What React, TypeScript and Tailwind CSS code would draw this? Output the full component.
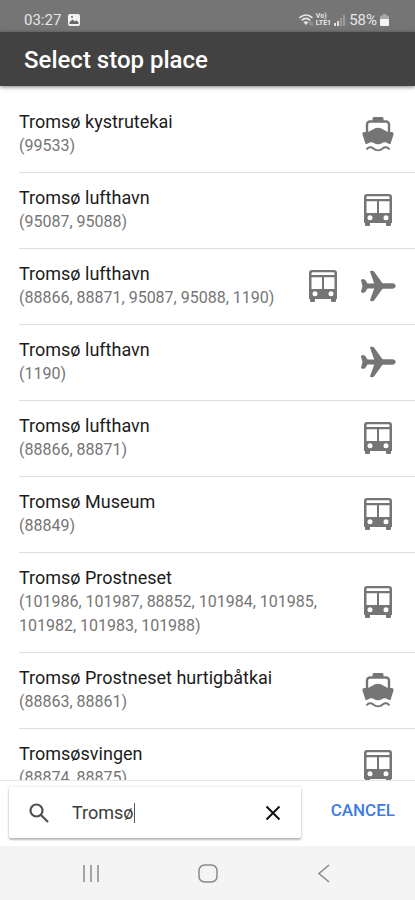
import React, { useState } from "react";

type Mode = "bus" | "boat" | "plane";

const stops: { name: string; codes: string; modes: Mode[] }[] = [
  { name: "Tromsø kystrutekai", codes: "99533", modes: ["boat"] },
  { name: "Tromsø lufthavn", codes: "95087, 95088", modes: ["bus"] },
  {
    name: "Tromsø lufthavn",
    codes: "88866, 88871, 95087, 95088, 1190",
    modes: ["bus", "plane"],
  },
  { name: "Tromsø lufthavn", codes: "1190", modes: ["plane"] },
  { name: "Tromsø lufthavn", codes: "88866, 88871", modes: ["bus"] },
  { name: "Tromsø Museum", codes: "88849", modes: ["bus"] },
  {
    name: "Tromsø Prostneset",
    codes: "101986, 101987, 88852, 101984, 101985, 101982, 101983, 101988",
    modes: ["bus"],
  },
  {
    name: "Tromsø Prostneset hurtigbåtkai",
    codes: "88863, 88861",
    modes: ["boat"],
  },
  { name: "Tromsøsvingen", codes: "88874, 88875", modes: ["bus"] },
];

const BusIcon = () => (
  <svg width="36" height="36" viewBox="0 0 36 36" role="img" aria-label="Bus">
    <path
      fill="currentColor"
      fillRule="evenodd"
      d="M7 2h22a3 3 0 0 1 3 3v26h-1v2a1 1 0 0 1-1 1h-3a1 1 0 0 1-1-1v-2H10v2a1 1 0 0 1-1 1H6a1 1 0 0 1-1-1v-2H4V5a3 3 0 0 1 3-3zM7.500 4.300a1 1 0 0 0-1 1V7h23V5.300a1 1 0 0 0-1-1zM6.500 9.300V21H17V9.300zM19 9.300V21h10.500V9.300zM10 23.200a2.500 2.500 0 1 0 0 5 2.500 2.500 0 0 0 0-5zM26 23.200a2.500 2.500 0 1 0 0 5 2.500 2.500 0 0 0 0-5z"
    />
  </svg>
);

const BoatIcon = () => (
  <svg width="36" height="36" viewBox="0 0 36 36" role="img" aria-label="Boat">
    <path
      fill="currentColor"
      d="M12.500 5V2.500a1.500 1.500 0 0 1 1.500-1.500h8a1.500 1.500 0 0 1 1.500 1.500V5z"
    />
    <path
      fill="none"
      stroke="currentColor"
      strokeWidth="2.400"
      d="M7 18V8.500a3 3 0 0 1 3-3h16a3 3 0 0 1 3 3V18"
    />
    <path
      fill="currentColor"
      d="M7 16c4-.5 5.500-3.800 11-4.300 5.500.5 7 3.800 11 4.300h2.500c1.500 0 2.400 1 2 2.400L30.500 28c-2 .5-3.500-1.500-5.500-1.700-2.500-.2-3.500 2-7 2s-4.500-2.200-7-2C9 26.500 7.500 28.500 5.500 28L2.500 18.400c-.4-1.400.5-2.400 2-2.400z"
    />
    <path
      fill="none"
      stroke="currentColor"
      strokeWidth="2"
      d="M6.500 33.500c2-2.500 4.500-3 6.500-1.200 3 2.600 7 2.600 10 0 2-1.800 4.500-1.300 6.500 1.200"
    />
  </svg>
);

const PlaneIcon = () => (
  <svg width="36" height="36" viewBox="0 0 36 36" role="img" aria-label="Plane">
    <path
      fill="currentColor"
      d="M1 12.500c0-.8.500-1.200 1.200-1.200h1.600c.7 0 1.200.3 1.600.9L7.500 15.600h6.700L10.300 4.500C9.800 3.300 10.400 2.800 11.400 2.800h1c.8 0 1.300.3 1.800 1L22.500 15.300h9.800c2 0 3.400 1.300 3.400 2.700s-1.400 2.700-3.400 2.700h-9.800L14.200 32.200c-.5.7-1 1-1.800 1h-1c-1 0-1.600-.5-1.100-1.700l3.900-11.100H7.500l-2.100 3.400c-.4.6-.9.900-1.600.9H2.200c-.7 0-1.200-.4-1.200-1.200L2.500 18z"
    />
  </svg>
);

const icons = { bus: BusIcon, boat: BoatIcon, plane: PlaneIcon };

const StatusBar = () => (
  <div className="flex h-8 shrink-0 items-end justify-between bg-[#757575] pr-[26px] pl-6 text-[#e6e6e6]">
    <div className="flex items-center gap-1.5">
      <span className="text-[15px] leading-6">03:27</span>
      <svg width="14" height="14" viewBox="0 0 14 14" aria-hidden="true">
        <rect x="1" y="1" width="12" height="12" rx="2" fill="#f2f2f2" />
        <path d="M2.500 11V9l3-2.500L8 8.500l1.500-1.200 2 2V11z" fill="#686868" />
        <circle cx="5" cy="4" r="1" fill="#686868" />
      </svg>
    </div>
    <div className="flex items-center gap-[3px]">
      <svg width="14" height="14" viewBox="0 0 14 14" aria-hidden="true">
        <g fill="none" stroke="#e6e6e6" strokeWidth="1.600">
          <path d="M.5 5c4-3.800 9-3.800 13 0" />
          <path d="M2.800 7.300c2.600-2.400 5.800-2.400 8.400 0" />
        </g>
        <path d="M4.500 9.300c1.600-1.400 3.400-1.400 5 0L7 12z" fill="#e6e6e6" />
        <path d="M11 8v4M13 9v4" stroke="#a8a8a8" />
      </svg>
      <span className="flex flex-col text-[7px] leading-[7px] font-bold">
        <span>Vo)</span>
        <span>LTE1</span>
      </span>
      <svg width="12" height="14" viewBox="0 0 12 14" aria-hidden="true">
        <path d="M0 13v-3h2v3zM3 13V8h2v5z" fill="#e0e0e0" />
        <path d="M6 13V5h2v8zM9 13V2h2v11z" fill="#9c9c9c" />
      </svg>
      <span className="text-[15px] leading-6">58%</span>
      <svg width="9" height="14" viewBox="0 0 9 14" aria-hidden="true">
        <path d="M3 1h3v1.500h2a1 1 0 0 1 1 1V7H0V3.500a1 1 0 0 1 1-1h2z" fill="#a8a8a8" />
        <path d="M0 6h9v6a1 1 0 0 1-1 1H1a1 1 0 0 1-1-1z" fill="#f5f5f5" />
      </svg>
    </div>
  </div>
);

const SearchBar = () => {
  const [query, setQuery] = useState("Tromsø");
  return (
    <div className="flex shrink-0 items-center border-t border-[#e6e6e6] bg-white pt-1.5 pr-5 pb-2 pl-[9px]">
      <div className="flex h-[51px] min-w-0 flex-1 items-center rounded-xs bg-white pr-4 pl-[19px] shadow-[0_2px_2px_rgba(0,0,0,0.24),0_0_3px_rgba(0,0,0,0.16)]">
        <svg width="22" height="22" viewBox="0 0 22 22" aria-hidden="true">
          <g fill="none" stroke="#505050" strokeWidth="2.200">
            <circle cx="8.500" cy="8.500" r="6" />
            <path d="M13 13l7 7" />
          </g>
        </svg>
        <label htmlFor="stop-search" className="sr-only">
          Stop place
        </label>
        <div className="ml-[22px] flex min-w-0 flex-1 items-center">
          <input
            id="stop-search"
            type="text"
            value={query}
            onChange={(e) => setQuery(e.target.value)}
            className="field-sizing-content min-w-0 text-lg leading-6 text-[#3c3c3c] caret-transparent outline-none"
          />
          <span className="h-5 w-px bg-[#555]" />
        </div>
        <button
          type="button"
          aria-label="Clear"
          onClick={() => setQuery("")}
          className="flex size-6 items-center justify-center"
        >
          <svg width="16" height="16" viewBox="0 0 16 16" aria-hidden="true">
            <path d="M1.500 1.500l13 13M14.500 1.500l-13 13" stroke="#111" strokeWidth="2" />
          </svg>
        </button>
      </div>
      <button
        type="button"
        className="mb-1.5 ml-[30px] text-[17px] leading-6 font-medium text-[#3b7ce8]"
      >
        CANCEL
      </button>
    </div>
  );
};

const SystemNav = () => (
  <nav className="flex h-[54px] shrink-0 items-center justify-around bg-[#f4f4f4] px-8 text-[#8a8a8a]">
    <button type="button" aria-label="Recent apps">
      <svg width="20" height="20" viewBox="0 0 20 20">
        <path d="M3 2v17M10 2v17M17 2v17" stroke="currentColor" strokeWidth="1.500" />
      </svg>
    </button>
    <button type="button" aria-label="Home">
      <svg width="20" height="20" viewBox="0 0 20 20">
        <rect
          x="1"
          y="2"
          width="18"
          height="17"
          rx="5.500"
          fill="none"
          stroke="currentColor"
          strokeWidth="1.500"
        />
      </svg>
    </button>
    <button type="button" aria-label="Back">
      <svg width="20" height="20" viewBox="0 0 20 20">
        <path d="M14 2L4 10.500 14 19" fill="none" stroke="currentColor" strokeWidth="1.500" />
      </svg>
    </button>
  </nav>
);

const App = () => {
  return (
    <div className="flex h-screen flex-col overflow-hidden bg-white font-['Roboto',sans-serif]">
      <StatusBar />
      <header className="z-10 flex h-[54px] shrink-0 items-center bg-[#424242] px-6 shadow-[0_1px_4px_rgba(0,0,0,0.5)]">
        <h1 className="pt-0.5 text-2xl leading-8 font-medium text-white">
          Select stop place
        </h1>
      </header>
      <ul className="min-h-0 flex-1 overflow-hidden pt-[11px] pl-[19px]">
        {stops.map((stop, i) => (
          <li
            key={i}
            className="flex items-center border-b border-[#dedede] pt-[13px] pr-[19px] pb-3.5"
          >
            <div className="min-w-0 flex-1">
              <p className="text-lg leading-6 text-[#1c1c1c]">{stop.name}</p>
              <p className="text-base leading-6 text-[#757575]">({stop.codes})</p>
            </div>
            <div className="ml-4 flex shrink-0 gap-[19px] text-[#757575]">
              {stop.modes.map((mode) => {
                const Icon = icons[mode];
                return <Icon key={mode} />;
              })}
            </div>
          </li>
        ))}
      </ul>
      <SearchBar />
      <SystemNav />
    </div>
  );
};

export default App;
